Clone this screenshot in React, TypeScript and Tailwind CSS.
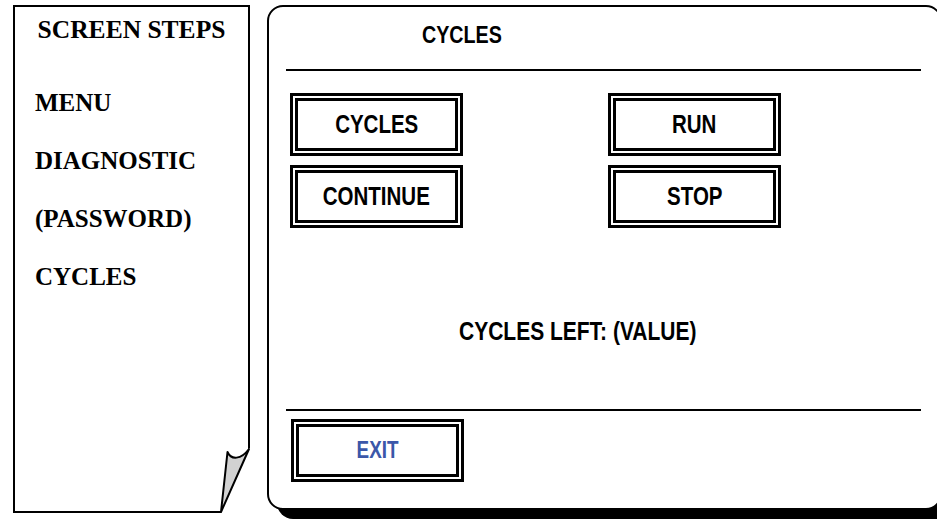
import React from "react";

const sans = { fontFamily: '"Liberation Sans", Arial, sans-serif' };
const serif = { fontFamily: '"Liberation Serif", "Times New Roman", serif' };

function Narrow({ children, className = "" }: { children: React.ReactNode; className?: string }) {
  return (
    <span
      className={"inline-block font-bold whitespace-nowrap scale-x-[0.82] leading-none " + className}
      style={sans}
    >
      {children}
    </span>
  );
}

function Btn({ label, blue = false }: { label: string; blue?: boolean }) {
  return (
    <div className="w-[173px] h-[63px] border-[3px] border-black p-[2px] bg-white">
      <div className="w-full h-full border-[3px] border-black flex items-center justify-center">
        <Narrow className={blue ? "text-[23px] text-[#3b57a9]" : "text-[25px] text-black"}>{label}</Narrow>
      </div>
    </div>
  );
}

export default function App() {
  return (
    <div className="relative w-[937px] h-[521px] overflow-hidden bg-white flex items-start">
      {/* left steps panel */}
      <div className="relative ml-[13px] mt-[5px] w-[237px] h-[508px] border-2 border-black flex flex-col shrink-0" style={serif}>
        <div className="h-[47px] flex items-center justify-center text-[25.5px] font-bold text-black">SCREEN STEPS</div>
        <div className="mt-[20px] pl-[20px] flex flex-col text-[25px] font-bold text-black">
          <div className="h-[58px] flex items-center">MENU</div>
          <div className="h-[58px] flex items-center">DIAGNOSTIC</div>
          <div className="h-[58px] flex items-center">(PASSWORD)</div>
          <div className="h-[58px] flex items-center">CYCLES</div>
        </div>
      </div>

      {/* page curl */}
      <svg className="absolute left-[210px] top-[440px]" width="44" height="80" viewBox="0 0 44 80">
        <polygon points="39,8 44,8 44,80 11,80 11,72" fill="#ffffff" />
        <path
          d="M17.5 12 C 21 20, 31 20, 39 9 L 11 72 Z"
          fill="#d2d2d2"
          stroke="#000"
          strokeWidth="2"
          strokeLinejoin="round"
        />
      </svg>

      {/* main window */}
      <div className="ml-[17px] mt-[5px] w-[675px] h-[505px] shrink-0 border-2 border-black rounded-[16px] bg-white shadow-[10px_9px_0_0_#000] flex flex-col">
        <div className="h-[56px] pl-[153px] flex items-center">
          <Narrow className="text-[24px] text-black origin-left">CYCLES</Narrow>
        </div>
        <div className="mt-[6px] ml-[17px] mr-[19px] h-[2px] bg-black" />

        <div className="mt-[22px] flex flex-col gap-[9px]">
          <div className="ml-[21px] flex gap-[145px]">
            <Btn label="CYCLES" />
            <Btn label="RUN" />
          </div>
          <div className="ml-[21px] flex gap-[145px]">
            <Btn label="CONTINUE" />
            <Btn label="STOP" />
          </div>
        </div>

        <div className="h-[181px] pt-[27px] pl-[190px] flex items-center">
          <Narrow className="text-[25.6px] text-black origin-left">CYCLES LEFT: (VALUE)</Narrow>
        </div>

        <div className="ml-[17px] mr-[19px] h-[2px] bg-black" />
        <div className="mt-[8px] ml-[22px]">
          <Btn label="EXIT" blue />
        </div>
      </div>
    </div>
  );
}
